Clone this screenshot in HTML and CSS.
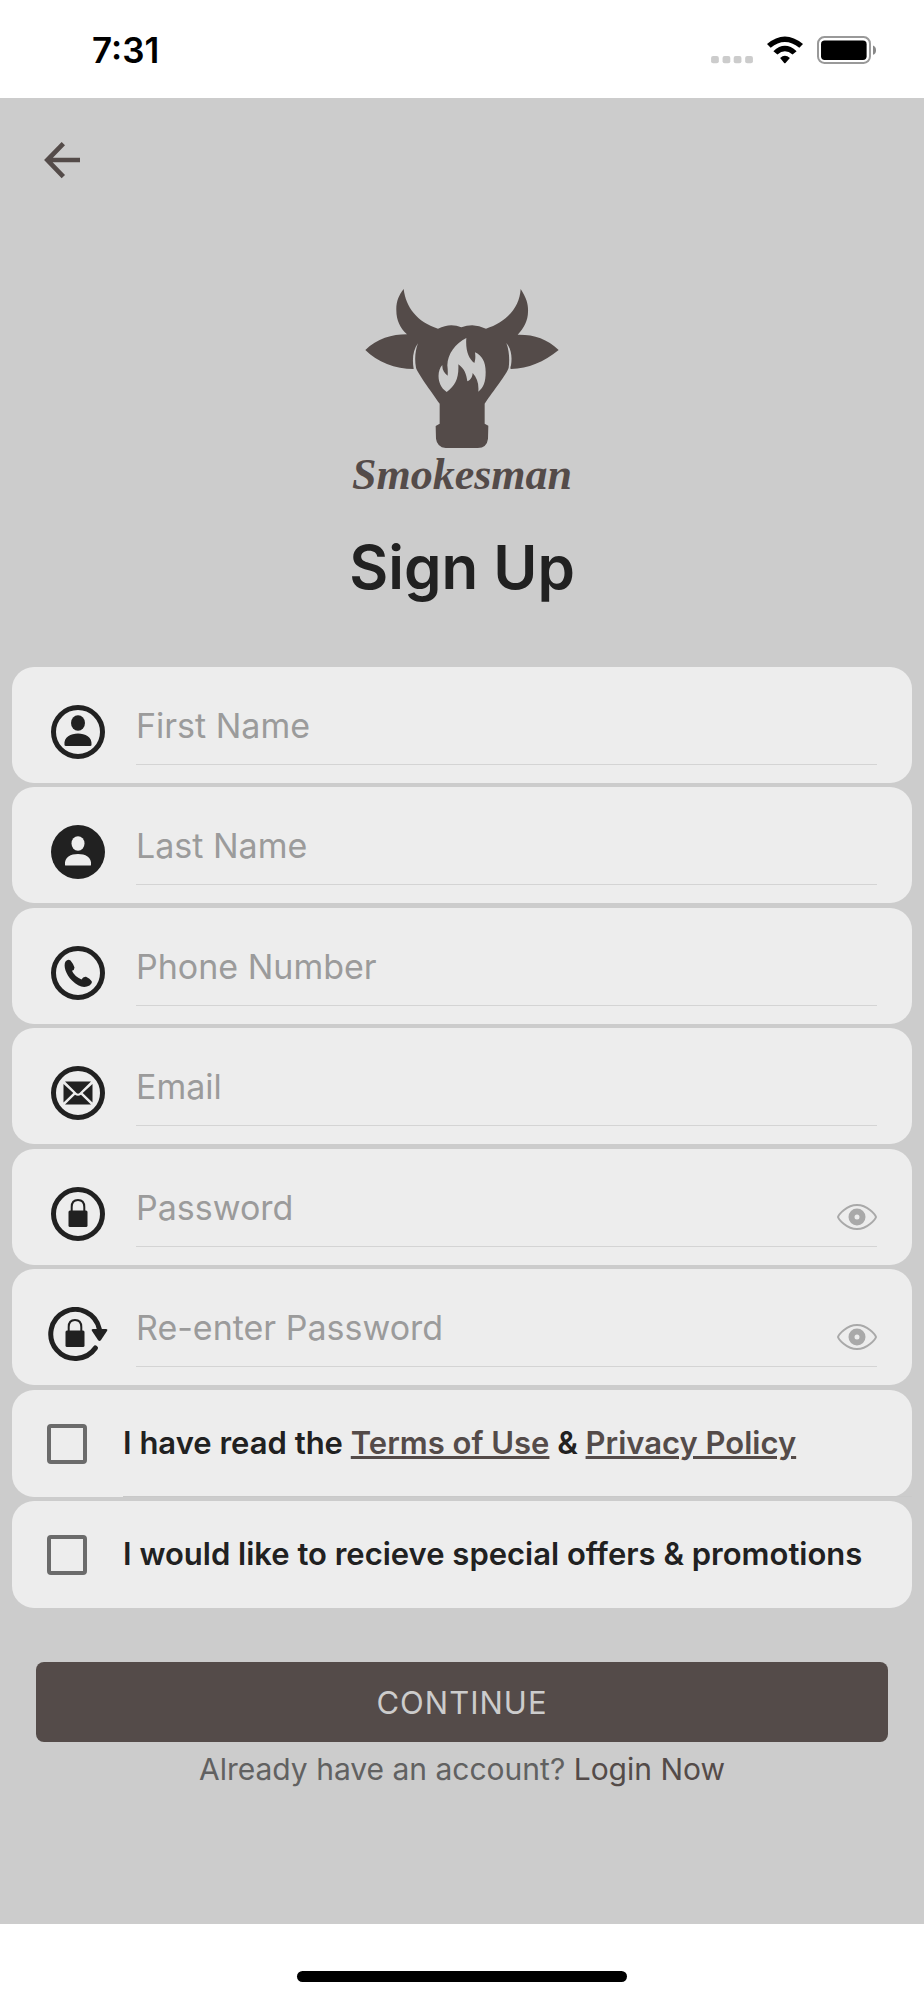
FILE: index.html
```
<!DOCTYPE html>
<html lang="en">
<head>
  <meta charset="utf-8">
  <meta name="viewport" content="width=device-width, initial-scale=1">
  <title>Smokesman - Sign Up</title>
  <link rel="stylesheet" href="styles.css">
</head>
<body>
  <header class="status-bar">
    <span class="time">7:31</span>
    <div class="status-icons">
      <svg class="signal" viewBox="95 49 124 83" fill="#ccc">
        <rect x="95" y="108" width="23" height="22" rx="6"/>
        <rect x="129" y="108" width="23" height="22" rx="6"/>
        <rect x="162" y="108" width="23" height="22" rx="6"/>
        <rect x="196" y="108" width="23" height="22" rx="6"/>
      </svg>
      <svg class="wifi" viewBox="262 49 107 83">
        <path d="M262 73Q315 28 369 73L358 84Q315 49 273 84Z"/>
        <path d="M281 94Q315 62 350 94L338 104Q315 84 293 104Z"/>
        <path d="M301 114Q315 101 330 114L317 129Q315 131 313 129Z"/>
      </svg>
      <svg class="battery" viewBox="413 49 176 83">
        <rect x="416" y="52" width="155" height="77" rx="19" fill="none" stroke="#999" stroke-width="6"/>
        <rect x="425" y="62" width="136" height="58" rx="11"/>
        <path d="M580 77Q589 80 589 91T580 105Z" fill="#888"/>
      </svg>
    </div>
  </header>

  <main class="screen">
    <button class="back-button" type="button" aria-label="Back">
      <svg viewBox="129 423 114 112" fill="none" stroke="#544b49" stroke-width="14">
        <path d="M240 479H142M190 430L142 479L190 529"/>
      </svg>
    </button>

    <div class="logo">
      <svg class="logo-bull" viewBox="65 50 600 486">
        <path fill="#544b49" fill-rule="evenodd" d="M190 56C196 110 230 155 293 175Q330 156 363 171Q400 156 437 175C500 155 538 110 541 56C560 85 564 105 563 125C563 150 550 175 532 193C580 192 620 205 655 239C610 275 565 295 512 296C509 296 510 290 512 285C516 260 513 235 498 218C507 240 508 270 505 292C500 310 460 360 433 400V460L444 466L443 505Q440 532 412 533H316Q290 530 287 505L286 467L298 460V400C270 360 230 305 227 292C222 265 225 240 233 219C218 240 215 265 220 296C165 296 110 275 75 239C110 205 155 192 200 192C180 175 168 150 168 120C167 95 175 75 190 56ZM378 203C345 220 322 250 321 285Q323 301 322 316C312 308 305 298 306 284C290 300 288 345 319 365C345 345 356 325 354 282C372 295 378 310 381 333C392 328 396 320 397 308C410 322 416 340 414 364C430 352 436 335 436 305C436 275 425 255 404 246C406 260 405 270 402 278C385 265 375 240 378 203Z"/>
      </svg>
      <span class="logo-name">Smokesman</span>
    </div>
    <h1>Sign Up</h1>

    <form>
      <div class="group">
        <div class="card field-card">
          <label for="first-name" aria-label="First Name">
            <svg class="field-icon" viewBox="0 0 60 54">
              <circle class="ring" cx="30" cy="27" r="24.5"/>
              <ellipse cx="30" cy="18" rx="7" ry="7.7"/>
              <path d="M16.500 40C15.500 32 23 28.500 30 28.500S44.500 32 43.500 40Q43.500 41 42 41H18Q16.500 41 16.500 40Z"/>
            </svg>
          </label>
          <div class="field"><input id="first-name" type="text" placeholder="First Name"></div>
        </div>
        <div class="card field-card">
          <label for="last-name" aria-label="Last Name">
            <svg class="field-icon" viewBox="0 0 60 54">
              <circle cx="30" cy="27" r="27"/>
              <g fill="#ededed">
                <ellipse cx="30" cy="18.500" rx="6.500" ry="7.300"/>
                <path d="M17 40C16 32 23 29 30 29S44 32 43 40Q43 40.500 42 40.500H18Q17 40.500 17 40Z"/>
              </g>
            </svg>
          </label>
          <div class="field"><input id="last-name" type="text" placeholder="Last Name"></div>
        </div>
      </div>

      <div class="group">
        <div class="card field-card">
          <label for="phone" aria-label="Phone Number">
            <svg class="field-icon" viewBox="0 0 60 54">
              <circle class="ring" cx="30" cy="27" r="24.5"/>
              <path d="M17.500 15.500Q20 12.500 22.500 14.500Q25.500 18 26.500 21.500Q26.500 24 24 24.800Q26 30 33.500 33.500Q35 30.500 38 30.800Q42 32.500 43.700 35.200Q44.500 37 41.500 39.500C36 42.500 30 40.500 24 34.500C18 28.500 15 20 17.500 15.500Z"/>
            </svg>
          </label>
          <div class="field"><input id="phone" type="tel" placeholder="Phone Number"></div>
        </div>
        <div class="card field-card">
          <label for="email" aria-label="Email">
            <svg class="field-icon" viewBox="0 0 60 54">
              <circle class="ring" cx="30" cy="27" r="24.5"/>
              <path d="M17 15.500H43L31.500 27Q30 28.300 28.500 27ZM15.500 18L25.300 27L15.500 36.500ZM44.500 18L34.700 27L44.500 36.500ZM17 38.500L27 28.700Q30 31 33 28.700L43 38.500Z"/>
            </svg>
          </label>
          <div class="field"><input id="email" type="email" placeholder="Email"></div>
        </div>
      </div>

      <div class="group">
        <div class="card field-card">
          <label for="password" aria-label="Password">
            <svg class="field-icon" viewBox="0 0 60 54">
              <circle class="ring" cx="30" cy="27" r="24.5"/>
              <rect x="20.500" y="23.500" width="19" height="16.500" rx="1.500"/>
              <path class="shackle" d="M23.700 24V20Q23.700 13 30 13T36.300 20V24"/>
            </svg>
          </label>
          <div class="field">
            <input id="password" type="password" placeholder="Password">
            <button class="eye-button" type="button" aria-label="Show password">
              <svg viewBox="0 0 40 26">
                <path class="eye-line" d="M1 13Q2 10 7 6Q13 1 20 1T33 6Q38 10 39 13Q38 16 33 20Q27 25 20 25T7 20Q2 16 1 13Z"/>
                <circle class="eye-pupil" cx="20" cy="13" r="5.5"/>
              </svg>
            </button>
          </div>
        </div>
        <div class="card field-card">
          <label for="password-again" aria-label="Re-enter Password">
            <svg class="field-icon" viewBox="0 0 60 54">
              <path class="ring" stroke-linecap="round" d="M47.400 41A24.500 24.500 0 1 1 51.300 22"/>
              <path d="M44 24Q43 22 45 22H58Q60 22 59 24L53 33Q51.500 35 50 33Z"/>
              <rect x="17.500" y="23.500" width="19" height="16.500" rx="1.500"/>
              <path class="shackle" d="M20.700 24V20Q20.700 13 27 13T33.300 20V24"/>
            </svg>
          </label>
          <div class="field">
            <input id="password-again" type="password" placeholder="Re-enter Password">
            <button class="eye-button" type="button" aria-label="Show password">
              <svg viewBox="0 0 40 26">
                <path class="eye-line" d="M1 13Q2 10 7 6Q13 1 20 1T33 6Q38 10 39 13Q38 16 33 20Q27 25 20 25T7 20Q2 16 1 13Z"/>
                <circle class="eye-pupil" cx="20" cy="13" r="5.5"/>
              </svg>
            </button>
          </div>
        </div>
      </div>

      <div class="group">
        <div class="card check-card">
          <input id="terms" type="checkbox">
          <label for="terms">I have read the <a href="#terms">Terms of Use</a> &amp; <a href="#privacy">Privacy Policy</a></label>
        </div>
        <div class="card check-card">
          <input id="offers" type="checkbox">
          <label for="offers">I would like to recieve special offers &amp; promotions</label>
        </div>
      </div>

      <button class="continue-button" type="submit">CONTINUE</button>
    </form>
    <p class="login">Already have an account? <a href="#login">Login Now</a></p>
  </main>

  <footer class="home-bar">
    <div class="home-indicator"></div>
  </footer>
</body>
</html>
```

FILE: styles.css
```
* {
  box-sizing: border-box;
}
body {
  display: flex;
  flex-direction: column;
  min-height: 100vh;
  margin: 0;
  background-color: #fff;
  color: #212121;
  font-family: Inter, "Liberation Sans", sans-serif;
}
button {
  padding: 0;
  border: none;
  background: none;
  font-family: inherit;
  cursor: pointer;
}
svg {
  display: block;
}

/* status bar */
.status-bar {
  display: flex;
  justify-content: space-between;
  align-items: center;
  height: 98px;
  padding: 2px 48px 0 92px;
  color: #000;
}
.time {
  font-size: 35px;
  font-weight: 600;
}
.status-icons {
  display: flex;
  gap: 14px;
}
.status-icons svg {
  height: 28px;
}
.signal {
  width: 42px;
}
.wifi {
  width: 36px;
}
.battery {
  width: 59px;
}

/* sign up screen */
.screen {
  flex-grow: 1;
  padding: 43px 12px 0;
  background-color: #ccc;
}
.back-button {
  display: block;
  margin-left: 31px;
}
.back-button svg {
  width: 38px;
  height: 38px;
}
.logo {
  display: flex;
  flex-direction: column;
  align-items: center;
  margin-top: 108px;
}
.logo-bull {
  width: 200px;
  height: 162px;
}
.logo-name {
  color: #544b49;
  font-family: "Liberation Serif", serif;
  font-size: 44px;
  font-style: italic;
  font-weight: 700;
  line-height: 52px;
}
h1 {
  margin: 28px 0 62px;
  font-size: 60px;
  font-weight: 600;
  line-height: 76px;
  text-align: center;
}
form,
.group {
  display: flex;
  flex-direction: column;
}
form {
  gap: 5px;
}
.group {
  gap: 4px;
}
.card {
  display: flex;
  border-radius: 22px;
  background-color: #ededed;
}
.field-card {
  align-items: flex-end;
  gap: 28px;
  padding: 20px 35px 18px 36px;
}
.field-icon {
  width: 60px;
  height: 54px;
  margin-bottom: 6px;
  fill: #212121;
}
.ring,
.shackle {
  fill: none;
  stroke: #212121;
  stroke-width: 5;
}
.shackle {
  stroke-width: 2;
}
.field {
  display: flex;
  flex: 1;
  align-items: flex-end;
  height: 78px;
  border-bottom: 1px solid #d4d4d4;
}
.field input {
  flex: 1;
  min-width: 0;
  height: 100%;
  padding: 0;
  border: none;
  outline: none;
  background: none;
  color: #212121;
  font-family: inherit;
  font-size: 34px;
}
.field input::placeholder {
  color: #9b9b9b;
}
.eye-button svg {
  width: 40px;
  height: 26px;
  margin-bottom: 16px;
  fill: none;
  stroke: #a9a9a9;
}
.eye-line {
  stroke-width: 2;
}
.eye-pupil {
  stroke-width: 6;
}

.check-card {
  position: relative;
  align-items: center;
  gap: 36px;
  min-height: 107px;
  padding: 0 35px;
}
.check-card input {
  flex-shrink: 0;
  width: 40px;
  height: 40px;
  margin: 0;
  border: 4px solid #6b6b6b;
  border-radius: 4px;
  appearance: none;
}
.check-card input:checked {
  background-color: #544b49;
}
.check-card label {
  padding-bottom: 2px;
  font-size: 31px;
  font-weight: 600;
}
.check-card:first-child::after {
  content: "";
  position: absolute;
  right: 0;
  bottom: 0;
  left: 111px;
  border-bottom: 1px solid #c9c9c9;
}
a {
  color: #544b49;
}

.continue-button {
  height: 80px;
  margin: 49px 24px 0;
  border-radius: 8px;
  background-color: #544b49;
  color: #ccc;
  font-size: 31px;
  letter-spacing: 1px;
}
.login {
  margin: 9px 0 0;
  color: #616161;
  font-size: 30px;
  line-height: 36px;
  text-align: center;
}
.login a {
  text-decoration: none;
}

.home-bar {
  display: flex;
  justify-content: center;
  align-items: flex-end;
  height: 76px;
  padding-bottom: 18px;
}
.home-indicator {
  width: 330px;
  height: 11px;
  border-radius: 6px;
  background-color: #000;
}
```
